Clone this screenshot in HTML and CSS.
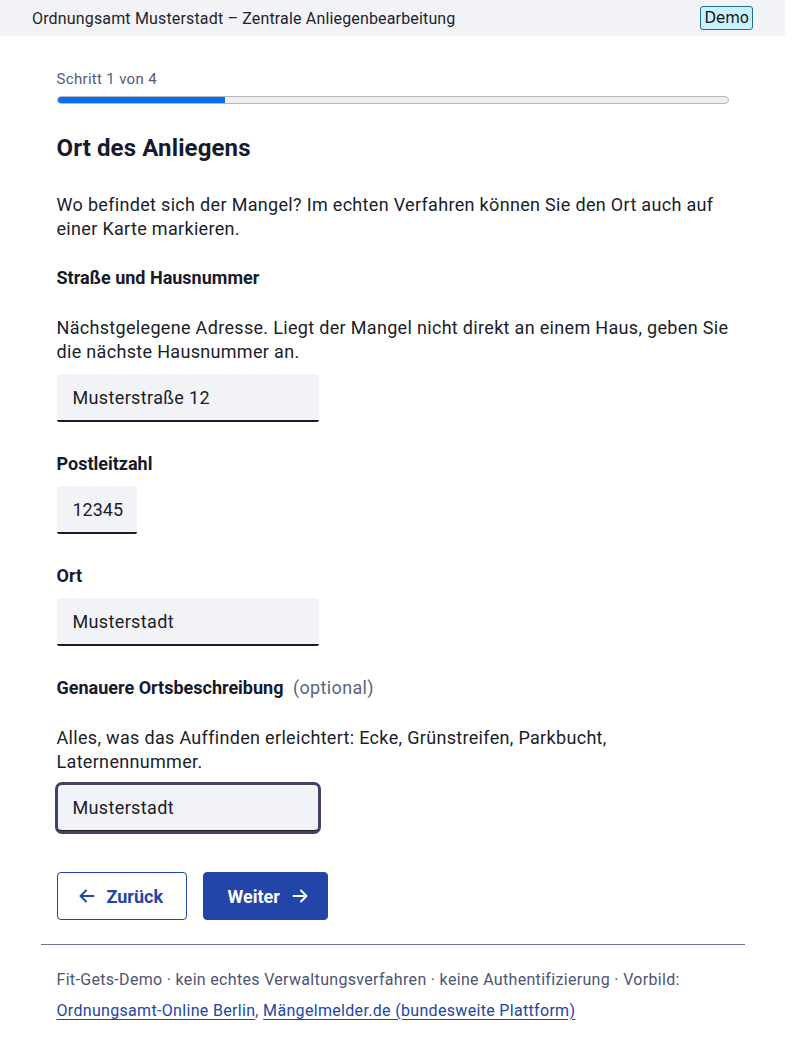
FILE: index.html
```html
<!DOCTYPE html>
<html lang="de">
<head>
<meta charset="utf-8">
<title>Ort des Anliegens</title>
<link rel="stylesheet" href="styles.css">
</head>
<body>
<div class="page">
  <header class="topbar">
    <span class="topbar-title">Ordnungsamt Musterstadt – Zentrale Anliegenbearbeitung</span>
    <span class="badge">Demo</span>
  </header>

  <main class="main">
    <div class="step">Schritt 1 von 4</div>
    <div class="progress"><div class="progress-fill" style="width:25%"></div></div>

    <h1 class="title">Ort des Anliegens</h1>
    <p class="intro">Wo befindet sich der Mangel? Im echten Verfahren können Sie den Ort auch auf einer Karte markieren.</p>

    <div class="field field-first">
      <label class="label" for="strasse">Straße und Hausnummer</label>
      <div class="hint">Nächstgelegene Adresse. Liegt der Mangel nicht direkt an einem Haus, geben Sie die nächste Hausnummer an.</div>
      <input class="input input-wide" id="strasse" type="text" value="Musterstraße 12">
    </div>

    <div class="field">
      <label class="label" for="plz">Postleitzahl</label>
      <input class="input input-plz" id="plz" type="text" value="12345">
    </div>

    <div class="field">
      <label class="label" for="ort">Ort</label>
      <input class="input input-wide" id="ort" type="text" value="Musterstadt">
    </div>

    <div class="field">
      <label class="label" for="beschreibung">Genauere Ortsbeschreibung <span class="optional">(optional)</span></label>
      <div class="hint">Alles, was das Auffinden erleichtert: Ecke, Grünstreifen, Parkbucht, Laternennummer.</div>
      <input class="input input-wide input-focus" id="beschreibung" type="text" value="Musterstadt">
    </div>

    <div class="actions">
      <button class="btn btn-secondary" type="button">
        <svg class="icon" width="18" height="18" viewBox="0 0 18 18" aria-hidden="true"><path d="M15.5 9H2.5M8 3.5L2.5 9L8 14.5" fill="none" stroke="currentColor" stroke-width="2" stroke-linecap="round" stroke-linejoin="round"/></svg>
        <span>Zurück</span>
      </button>
      <button class="btn btn-primary" type="button">
        <span>Weiter</span>
        <svg class="icon" width="18" height="18" viewBox="0 0 18 18" aria-hidden="true"><path d="M2.5 9H15.5M10 3.5L15.5 9L10 14.5" fill="none" stroke="currentColor" stroke-width="2" stroke-linecap="round" stroke-linejoin="round"/></svg>
      </button>
    </div>
  </main>

  <footer class="footer">
    <hr class="rule">
    <p class="footer-text">Fit-Gets-Demo · kein echtes Verwaltungsverfahren · keine Authentifizierung · Vorbild: <a href="#">Ordnungsamt-Online Berlin</a>, <a href="#">Mängelmelder.de (bundesweite Plattform)</a></p>
  </footer>
</div>
</body>
</html>
```
FILE: styles.css
```css
html, body {
  margin: 0;
  padding: 0;
  background: #ffffff;
}

body {
  font-family: Roboto, "Noto Sans", sans-serif;
  color: #1b1c2c;
  letter-spacing: 0.02em;
}

.page {
  width: 785px;
}

.topbar {
  height: 36px;
  background: #f2f3f7;
  display: flex;
  align-items: center;
  justify-content: space-between;
  padding: 0 32px;
  box-sizing: border-box;
}

.topbar-title {
  font-size: 16px;
  color: #1e1f2c;
  letter-spacing: 0.01em;
}

.badge {
  font-family: "DejaVu Sans", sans-serif;
  font-size: 15px;
  line-height: 22px;
  letter-spacing: 0;
  padding: 0 3px;
  background: #c9f1fd;
  border: 1px solid #1d6f90;
  border-radius: 3px;
  color: #111;
}

.main {
  width: 704px;
  margin: 0 auto;
  padding: 0 16px;
  box-sizing: border-box;
}

.step {
  margin-top: 33px;
  font-size: 15px;
  line-height: 20px;
  color: #535b7c;
}

.progress {
  margin-top: 7px;
  height: 8px;
  box-sizing: border-box;
  border: 1px solid #b9b9b9;
  background: #eeeeee;
  border-radius: 4px;
  overflow: hidden;
}

.progress-fill {
  height: 100%;
  background: #0b6ef0;
}

.title {
  margin: 28px 0 0;
  font-size: 24px;
  line-height: 32px;
  font-weight: 700;
  letter-spacing: 0.005em;
  color: #161a2d;
}

.intro {
  margin: 29px 0 0;
  font-size: 18px;
  line-height: 24px;
}

.field {
  margin-top: 30px;
  display: flex;
  flex-direction: column;
  align-items: flex-start;
}

.field-first {
  margin-top: 25px;
}

.label {
  font-size: 18px;
  line-height: 24px;
  font-weight: 700;
  letter-spacing: 0;
  color: #161a2d;
}

.optional {
  font-weight: 400;
  color: #5c6384;
  margin-left: 5px;
  letter-spacing: 0.02em;
}

.hint {
  margin-top: 26px;
  font-size: 18px;
  line-height: 24px;
}

.input {
  margin-top: 10px;
  height: 48px;
  box-sizing: border-box;
  padding: 0 16px;
  border: none;
  border-bottom: 2px solid #1b1c2e;
  border-radius: 3px 3px 2px 2px;
  background: #f2f3f7;
  font-family: Roboto, "Noto Sans", sans-serif;
  font-size: 18px;
  letter-spacing: 0.02em;
  color: #1b1c2c;
}

.input-wide {
  width: 262px;
}

.input-plz {
  width: 80px;
  padding-right: 0;
  letter-spacing: 0;
}

.input-focus {
  outline: 3px solid #3d4567;
  outline-offset: -1px;
  border-radius: 5px;
}

.actions {
  margin-top: 40px;
  display: flex;
  gap: 16px;
}

.btn {
  height: 48px;
  box-sizing: border-box;
  display: inline-flex;
  align-items: center;
  gap: 11px;
  font-family: Roboto, "Noto Sans", sans-serif;
  font-size: 18px;
  font-weight: 700;
  letter-spacing: 0;
  border-radius: 4px;
  cursor: pointer;
}

.btn-secondary {
  width: 130px;
  padding: 0 0 0 20px;
  background: #ffffff;
  color: #2245a8;
  border: 1px solid #2245a8;
}

.btn-primary {
  width: 125px;
  padding: 0 0 0 24px;
  background: #2245a8;
  color: #ffffff;
  border: 1px solid #2245a8;
}

.icon {
  flex: none;
  display: block;
}

.footer {
  width: 704px;
  margin: 0 auto;
}

.rule {
  margin: 24px 0 0;
  border: none;
  border-top: 1px solid #6b7394;
  height: 0;
}

.footer-text {
  margin: 19px 0 0;
  padding: 0 16px;
  font-size: 16px;
  line-height: 31px;
  color: #4d5475;
}

.footer-text a {
  color: #2245a8;
  text-decoration: underline;
  text-underline-offset: 3px;
}
```
